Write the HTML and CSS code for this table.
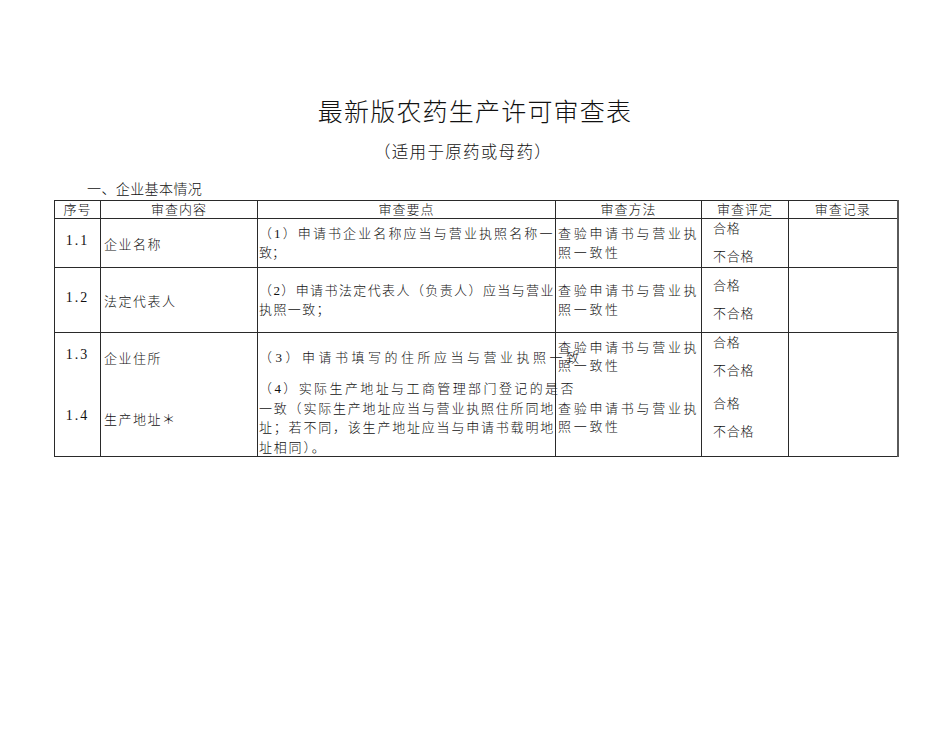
FILE: index.html
```html
<!DOCTYPE html>
<html lang="zh-CN">
<head>
<meta charset="utf-8">
<title>最新版农药生产许可审查表</title>
<link rel="stylesheet" href="styles.css">
</head>
<body>
<div class="page">
  <h1 class="title">最新版农药生产许可审查表</h1>
  <p class="subtitle">（适用于原药或母药）</p>
  <p class="section">一、企业基本情况</p>
  <table class="review">
    <colgroup>
      <col class="w-no"><col class="w-item"><col class="w-point"><col class="w-method"><col class="w-eval"><col class="w-rec">
    </colgroup>
    <thead>
      <tr class="hd">
        <th>序号</th><th>审查内容</th><th>审查要点</th><th>审查方法</th><th>审查评定</th><th class="c-rec">审查记录</th>
      </tr>
    </thead>
    <tbody>
      <tr class="r1">
        <td class="c-no">1.1</td>
        <td class="c-item">企业名称</td>
        <td class="c-point"><span class="ln ls21">（1）申请书企业名称应当与营业执照名称一</span><span class="ln">致；</span></td>
        <td class="c-method"><span class="ln">查验申请书与营业执</span><span class="ln">照一致性</span></td>
        <td class="c-eval"><span class="ok">合格</span><span class="ng">不合格</span></td>
        <td class="c-rec"></td>
      </tr>
      <tr class="r2">
        <td class="c-no">1.2</td>
        <td class="c-item">法定代表人</td>
        <td class="c-point"><span class="ln ls14">（2）申请书法定代表人（负责人）应当与营业</span><span class="ln ls14">执照一致；</span></td>
        <td class="c-method"><span class="ln">查验申请书与营业执</span><span class="ln">照一致性</span></td>
        <td class="c-eval"><span class="ok">合格</span><span class="ng">不合格</span></td>
        <td class="c-rec"></td>
      </tr>
      <tr class="r3">
        <td class="c-no">1.3</td>
        <td class="c-item">企业住所</td>
        <td class="c-point"><span class="ln ls35">（3）申请书填写的住所应当与营业执照一致</span></td>
        <td class="c-method tight"><span class="ln">查验申请书与营业执</span><span class="ln">照一致性</span></td>
        <td class="c-eval"><span class="ok">合格</span><span class="ng">不合格</span></td>
        <td class="c-rec"></td>
      </tr>
      <tr class="r4">
        <td class="c-no">1.4</td>
        <td class="c-item">生产地址＊</td>
        <td class="c-point loose"><div class="stack"><span class="ln ls24">（4）实际生产地址与工商管理部门登记的是否</span><span class="ln ls18">一致（实际生产地址应当与营业执照住所同地</span><span class="ln ls18">址；若不同，该生产地址应当与申请书载明地</span><span class="ln ls18">址相同）。</span></div></td>
        <td class="c-method tight"><span class="ln">查验申请书与营业执</span><span class="ln">照一致性</span></td>
        <td class="c-eval"><span class="ok">合格</span><span class="ng">不合格</span></td>
        <td class="c-rec"></td>
      </tr>
    </tbody>
  </table>
</div>
</body>
</html>
```
FILE: styles.css
```css
html, body {
  margin: 0;
  padding: 0;
  background: #ffffff;
}

body {
  font-family: "Liberation Serif", "Noto Sans CJK SC", serif;
  color: #111111;
}

.page {
  width: 950px;
  height: 735px;
  overflow: hidden;
}

.title {
  margin: 98px 0 0;
  font-size: 25px;
  line-height: 30px;
  font-weight: 300;
  letter-spacing: 1.2px;
  text-align: center;
}

.subtitle {
  margin: 13px 0 0;
  padding-right: 24px;
  font-family: "Noto Sans CJK SC", sans-serif;
  font-size: 16.5px;
  line-height: 20px;
  font-weight: 300;
  letter-spacing: 1.3px;
  text-align: center;
}

.section {
  margin: 21px 0 0;
  padding-left: 87px;
  font-size: 14px;
  line-height: 16px;
  font-weight: 300;
  letter-spacing: 0.4px;
}

.review {
  margin: 2px 0 0 54px;
  border-collapse: collapse;
  table-layout: fixed;
  width: 843px;
  font-size: 13px;
  font-weight: 300;
}

.w-no { width: 46px; }
.w-item { width: 157px; }
.w-point { width: 298px; }
.w-method { width: 146px; }
.w-eval { width: 87px; }
.w-rec { width: 109px; }

.review th,
.review td {
  border: 1px solid #2a2a2a;
  padding: 0;
  vertical-align: middle;
  font-weight: 300;
  white-space: nowrap;
  overflow: visible;
}

.review .c-rec {
  border-right: 2px solid #5a5a5a;
}

.hd { height: 18px; }
.hd th {
  line-height: 16px;
  letter-spacing: 1px;
  text-align: center;
}

.r1 { height: 49px; }
.r2 { height: 65px; }
.r3 { height: 48px; }
.r4 { height: 75px; }

.r3 td { border-bottom: none; }
.r4 td { border-top: none; }

.c-no {
  text-align: center;
  font-size: 14px;
  letter-spacing: 2px;
  padding-bottom: 5px !important;
}

.c-item {
  padding-left: 3px !important;
  letter-spacing: 1.5px;
}

.c-point {
  padding-left: 1px !important;
  line-height: 19px;
}

.stack {
  height: 70px;
  display: flex;
  flex-direction: column;
  justify-content: center;
  line-height: 19.7px;
}

.ln { display: block; }

.ls14 { letter-spacing: 1.4px; }
.ls18 { letter-spacing: 1.8px; }
.ls21 { letter-spacing: 2.1px; }
.ls24 { letter-spacing: 2.4px; }
.ls35 { letter-spacing: 3.5px; }

.c-method {
  padding-left: 2px !important;
  line-height: 19px;
  letter-spacing: 2.7px;
}

.c-method.tight { line-height: 18px; }

.c-eval {
  padding-left: 11px !important;
  letter-spacing: 0.8px;
  line-height: 20px;
}

.ok, .ng { display: block; }
.ng { margin-top: 8px; }
```
